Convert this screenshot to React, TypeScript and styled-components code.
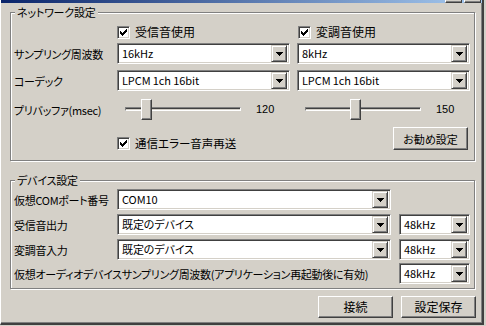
import React from "react";
import styled, { createGlobalStyle } from "styled-components";

const FONT = `"Noto Sans CJK JP", "Liberation Sans", sans-serif`;

const Global = createGlobalStyle`
  html, body { margin: 0; padding: 0; background: #d4d0c8; }
  body { font-family: ${FONT}; font-size: 12px; color: #000; }
  * { box-sizing: border-box; }
`;

const Screen = styled.div`
  width: 486px;
  height: 326px;
  overflow: hidden;
  background: #d4d0c8;
  display: flex;
`;

const Window = styled.div`
  width: 484px;
  height: 325px;
  display: flex;
  flex-direction: column;
  border-left: 1px solid #ffffff;
  border-right: 2px solid #404040;
  border-bottom: 2px solid #404040;
  box-shadow: inset -1px -1px 0 #808080;
  font-family: ${FONT};
  font-size: 12px;
  font-feature-settings: "palt";
  color: #000;
`;

const TitleStrip = styled.div`
  height: 3px;
  flex: none;
  display: flex;
  justify-content: flex-end;
  gap: 2px;
  padding-right: 1px;
  background: linear-gradient(to right, #0a246a, #a6caf0);
`;

const TitleBtn = styled.div`
  width: 17px;
  height: 3px;
  background: #d4d0c8;
  border-left: 1px solid #ffffff;
  border-right: 1px solid #404040;
  border-bottom: 1px solid #404040;
  box-shadow: inset 0 -1px 0 #808080;
`;

const Client = styled.div`
  flex: 1;
  display: flex;
  flex-direction: column;
  padding: 9px 0 0 9px;
`;

const Group = styled.div<{ $h: number; $pt: number; $mt: number }>`
  position: relative;
  width: 465px;
  height: ${(p) => p.$h}px;
  margin-top: ${(p) => p.$mt}px;
  flex: none;
  border: 1px solid #808080;
  box-shadow: inset 1px 1px 0 #ffffff, 1px 1px 0 #ffffff;
  padding: ${(p) => p.$pt}px 0 0 3px;
`;

const Legend = styled.div`
  position: absolute;
  top: -8px;
  left: 4px;
  height: 14px;
  line-height: 14px;
  padding: 0 2px;
  background: #d4d0c8;
  white-space: nowrap;
  font-size: 11px;
  letter-spacing: -0.2px;
`;

const Row = styled.div<{ $mt: number; $h: number }>`
  display: flex;
  align-items: center;
  margin-top: ${(p) => p.$mt}px;
  height: ${(p) => p.$h}px;
`;

const Label = styled.span<{ $w: number }>`
  width: ${(p) => p.$w}px;
  flex: none;
  white-space: nowrap;
  overflow: hidden;
  line-height: 14px;
  font-size: 11px;
  letter-spacing: -0.3px;
`;

const CheckItem = styled.label<{ $w?: number; $ml?: number; $self?: string; $fs?: number }>`
  display: flex;
  align-items: center;
  gap: 5px;
  flex: none;
  width: ${(p) => (p.$w ? `${p.$w}px` : "auto")};
  margin-left: ${(p) => p.$ml ?? 0}px;
  align-self: ${(p) => p.$self ?? "auto"};
  white-space: nowrap;
  line-height: 14px;
  font-size: ${(p) => p.$fs ?? 12}px;
`;

const CheckBox = styled.span`
  width: 13px;
  height: 13px;
  flex: none;
  background: #ffffff;
  border: 1px solid;
  border-color: #808080 #ffffff #ffffff #808080;
  box-shadow: inset 1px 1px 0 #404040, inset -1px -1px 0 #d4d0c8;
  display: flex;
  align-items: center;
  justify-content: center;
`;

const ComboBox = styled.div<{ $w: number }>`
  width: ${(p) => p.$w}px;
  height: 21px;
  flex: none;
  background: #ffffff;
  border: 1px solid;
  border-color: #808080 #ffffff #ffffff #808080;
  box-shadow: inset 1px 1px 0 #404040, inset -1px -1px 0 #d4d0c8;
  display: flex;
  align-items: center;
  padding: 2px;
`;

const ComboText = styled.span`
  flex: 1;
  padding-left: 2px;
  white-space: nowrap;
  overflow: hidden;
  line-height: 15px;
  font-size: 11px;
  letter-spacing: -0.1px;
`;

const DropBtn = styled.div`
  width: 16px;
  height: 17px;
  flex: none;
  background: #d4d0c8;
  border: 1px solid;
  border-color: #d4d0c8 #404040 #404040 #d4d0c8;
  box-shadow: inset 1px 1px 0 #ffffff, inset -1px -1px 0 #808080;
  display: flex;
  align-items: center;
  justify-content: center;
`;

const PushButton = styled.button<{ $w: number; $h: number; $mr?: number; $fs?: number }>`
  width: ${(p) => p.$w}px;
  height: ${(p) => p.$h}px;
  flex: none;
  margin-right: ${(p) => p.$mr ?? 0}px;
  padding: 0;
  background: #d4d0c8;
  border: 1px solid;
  border-color: #ffffff #404040 #404040 #ffffff;
  box-shadow: inset -1px -1px 0 #808080;
  font-family: ${FONT};
  font-feature-settings: "palt";
  font-size: ${(p) => p.$fs ?? 12}px;
  color: #000;
  line-height: 14px;
`;

const SliderBox = styled.div<{ $w: number }>`
  position: relative;
  width: ${(p) => p.$w}px;
  height: 21px;
  flex: none;
`;

const Groove = styled.div`
  position: absolute;
  left: 0;
  right: 0;
  top: 8px;
  height: 4px;
  border: 1px solid;
  border-color: #808080 #ffffff #ffffff #808080;
  box-shadow: inset 0 1px 0 #404040;
`;

const Thumb = styled.div`
  position: absolute;
  top: 0;
  width: 11px;
  height: 21px;
  background: #d4d0c8;
  border: 1px solid;
  border-color: #ffffff #404040 #404040 #ffffff;
  box-shadow: inset -1px -1px 0 #808080;
`;

const Value = styled.span<{ $w: number; $ml: number }>`
  width: ${(p) => p.$w}px;
  margin-left: ${(p) => p.$ml}px;
  flex: none;
  font-size: 11px;
  line-height: 13px;
  font-family: "Liberation Sans", sans-serif;
`;

const Gap = styled.span<{ $w: number }>`
  width: ${(p) => p.$w}px;
  flex: none;
`;

const Fill = styled.span`
  flex: 1;
`;

const ButtonRow = styled.div`
  display: flex;
  justify-content: flex-end;
  gap: 8px;
  width: 466px;
  margin-top: 7px;
`;

const Check = () => (
  <svg width="7" height="7" viewBox="0 0 7 7" shapeRendering="crispEdges">
    <path
      fill="#000"
      d="M6 0h1v3h-1zM5 1h1v3h-1zM4 2h1v3h-1zM3 3h1v3h-1zM2 4h1v3h-1zM1 3h1v3h-1zM0 2h1v3h-1z"
    />
  </svg>
);

const Arrow = () => (
  <svg width="7" height="4" viewBox="0 0 7 4" shapeRendering="crispEdges">
    <path fill="#000" d="M0 0h7v1h-1v1h-1v1h-1v1h-1v-1h-1v-1h-1v-1h-1z" />
  </svg>
);

const Combo = ({ w, text }: { w: number; text: string }) => (
  <ComboBox $w={w}>
    <ComboText>{text}</ComboText>
    <DropBtn>
      <Arrow />
    </DropBtn>
  </ComboBox>
);

const CheckOpt = ({
  text,
  w,
  ml,
  self,
  fs,
}: {
  text: string;
  w?: number;
  ml?: number;
  self?: string;
  fs?: number;
}) => (
  <CheckItem $w={w} $ml={ml} $self={self} $fs={fs}>
    <CheckBox>
      <Check />
    </CheckBox>
    <span>{text}</span>
  </CheckItem>
);

const Slider = ({ w, pos }: { w: number; pos: number }) => (
  <SliderBox $w={w}>
    <Groove />
    <Thumb style={{ left: pos }} />
  </SliderBox>
);

export default function App() {
  return (
    <Screen>
      <Global />
      <Window>
        <TitleStrip>
          <TitleBtn />
          <TitleBtn />
        </TitleStrip>
        <Client>
          <Group $h={149} $pt={11} $mt={0}>
            <Legend>ネットワーク設定</Legend>
            <Row $mt={0} $h={16}>
              <CheckOpt text="受信音使用" w={181} ml={103} />
              <CheckOpt text="変調音使用" />
            </Row>
            <Row $mt={3} $h={21}>
              <Label $w={103}>サンプリング周波数</Label>
              <Combo w={173} text="16kHz" />
              <Gap $w={7} />
              <Combo w={173} text="8kHz" />
            </Row>
            <Row $mt={6} $h={21}>
              <Label $w={103}>コーデック</Label>
              <Combo w={173} text="LPCM 1ch 16bit" />
              <Gap $w={7} />
              <Combo w={173} text="LPCM 1ch 16bit" />
            </Row>
            <Row $mt={8} $h={21}>
              <Label $w={111}>プリバッファ(msec)</Label>
              <Slider w={116} pos={16} />
              <Value $w={49} $ml={15}>
                120
              </Value>
              <Slider w={116} pos={45} />
              <Value $w={20} $ml={15}>
                150
              </Value>
            </Row>
            <Row $mt={7} $h={23}>
              <CheckOpt text="通信エラー音声再送" ml={103} self="flex-end" fs={11.5} />
              <Fill />
              <PushButton $w={75} $h={23} $mr={6} $fs={11}>
                お勧め設定
              </PushButton>
            </Row>
          </Group>

          <Group $h={109} $pt={8} $mt={19}>
            <Legend>デバイス設定</Legend>
            <Row $mt={0} $h={21}>
              <Label $w={103}>仮想COMポート番号</Label>
              <Combo w={274} text="COM10" />
            </Row>
            <Row $mt={4} $h={21}>
              <Label $w={103}>受信音出力</Label>
              <Combo w={274} text="既定のデバイス" />
              <Gap $w={8} />
              <Combo w={71} text="48kHz" />
            </Row>
            <Row $mt={4} $h={21}>
              <Label $w={103}>変調音入力</Label>
              <Combo w={274} text="既定のデバイス" />
              <Gap $w={8} />
              <Combo w={71} text="48kHz" />
            </Row>
            <Row $mt={3} $h={21}>
              <Label $w={385}>
                仮想オーディオデバイスサンプリング周波数(アプリケーション再起動後に有効)
              </Label>
              <Combo w={71} text="48kHz" />
            </Row>
          </Group>

          <ButtonRow>
            <PushButton $w={75} $h={22}>
              接続
            </PushButton>
            <PushButton $w={75} $h={22}>
              設定保存
            </PushButton>
          </ButtonRow>
        </Client>
      </Window>
    </Screen>
  );
}
